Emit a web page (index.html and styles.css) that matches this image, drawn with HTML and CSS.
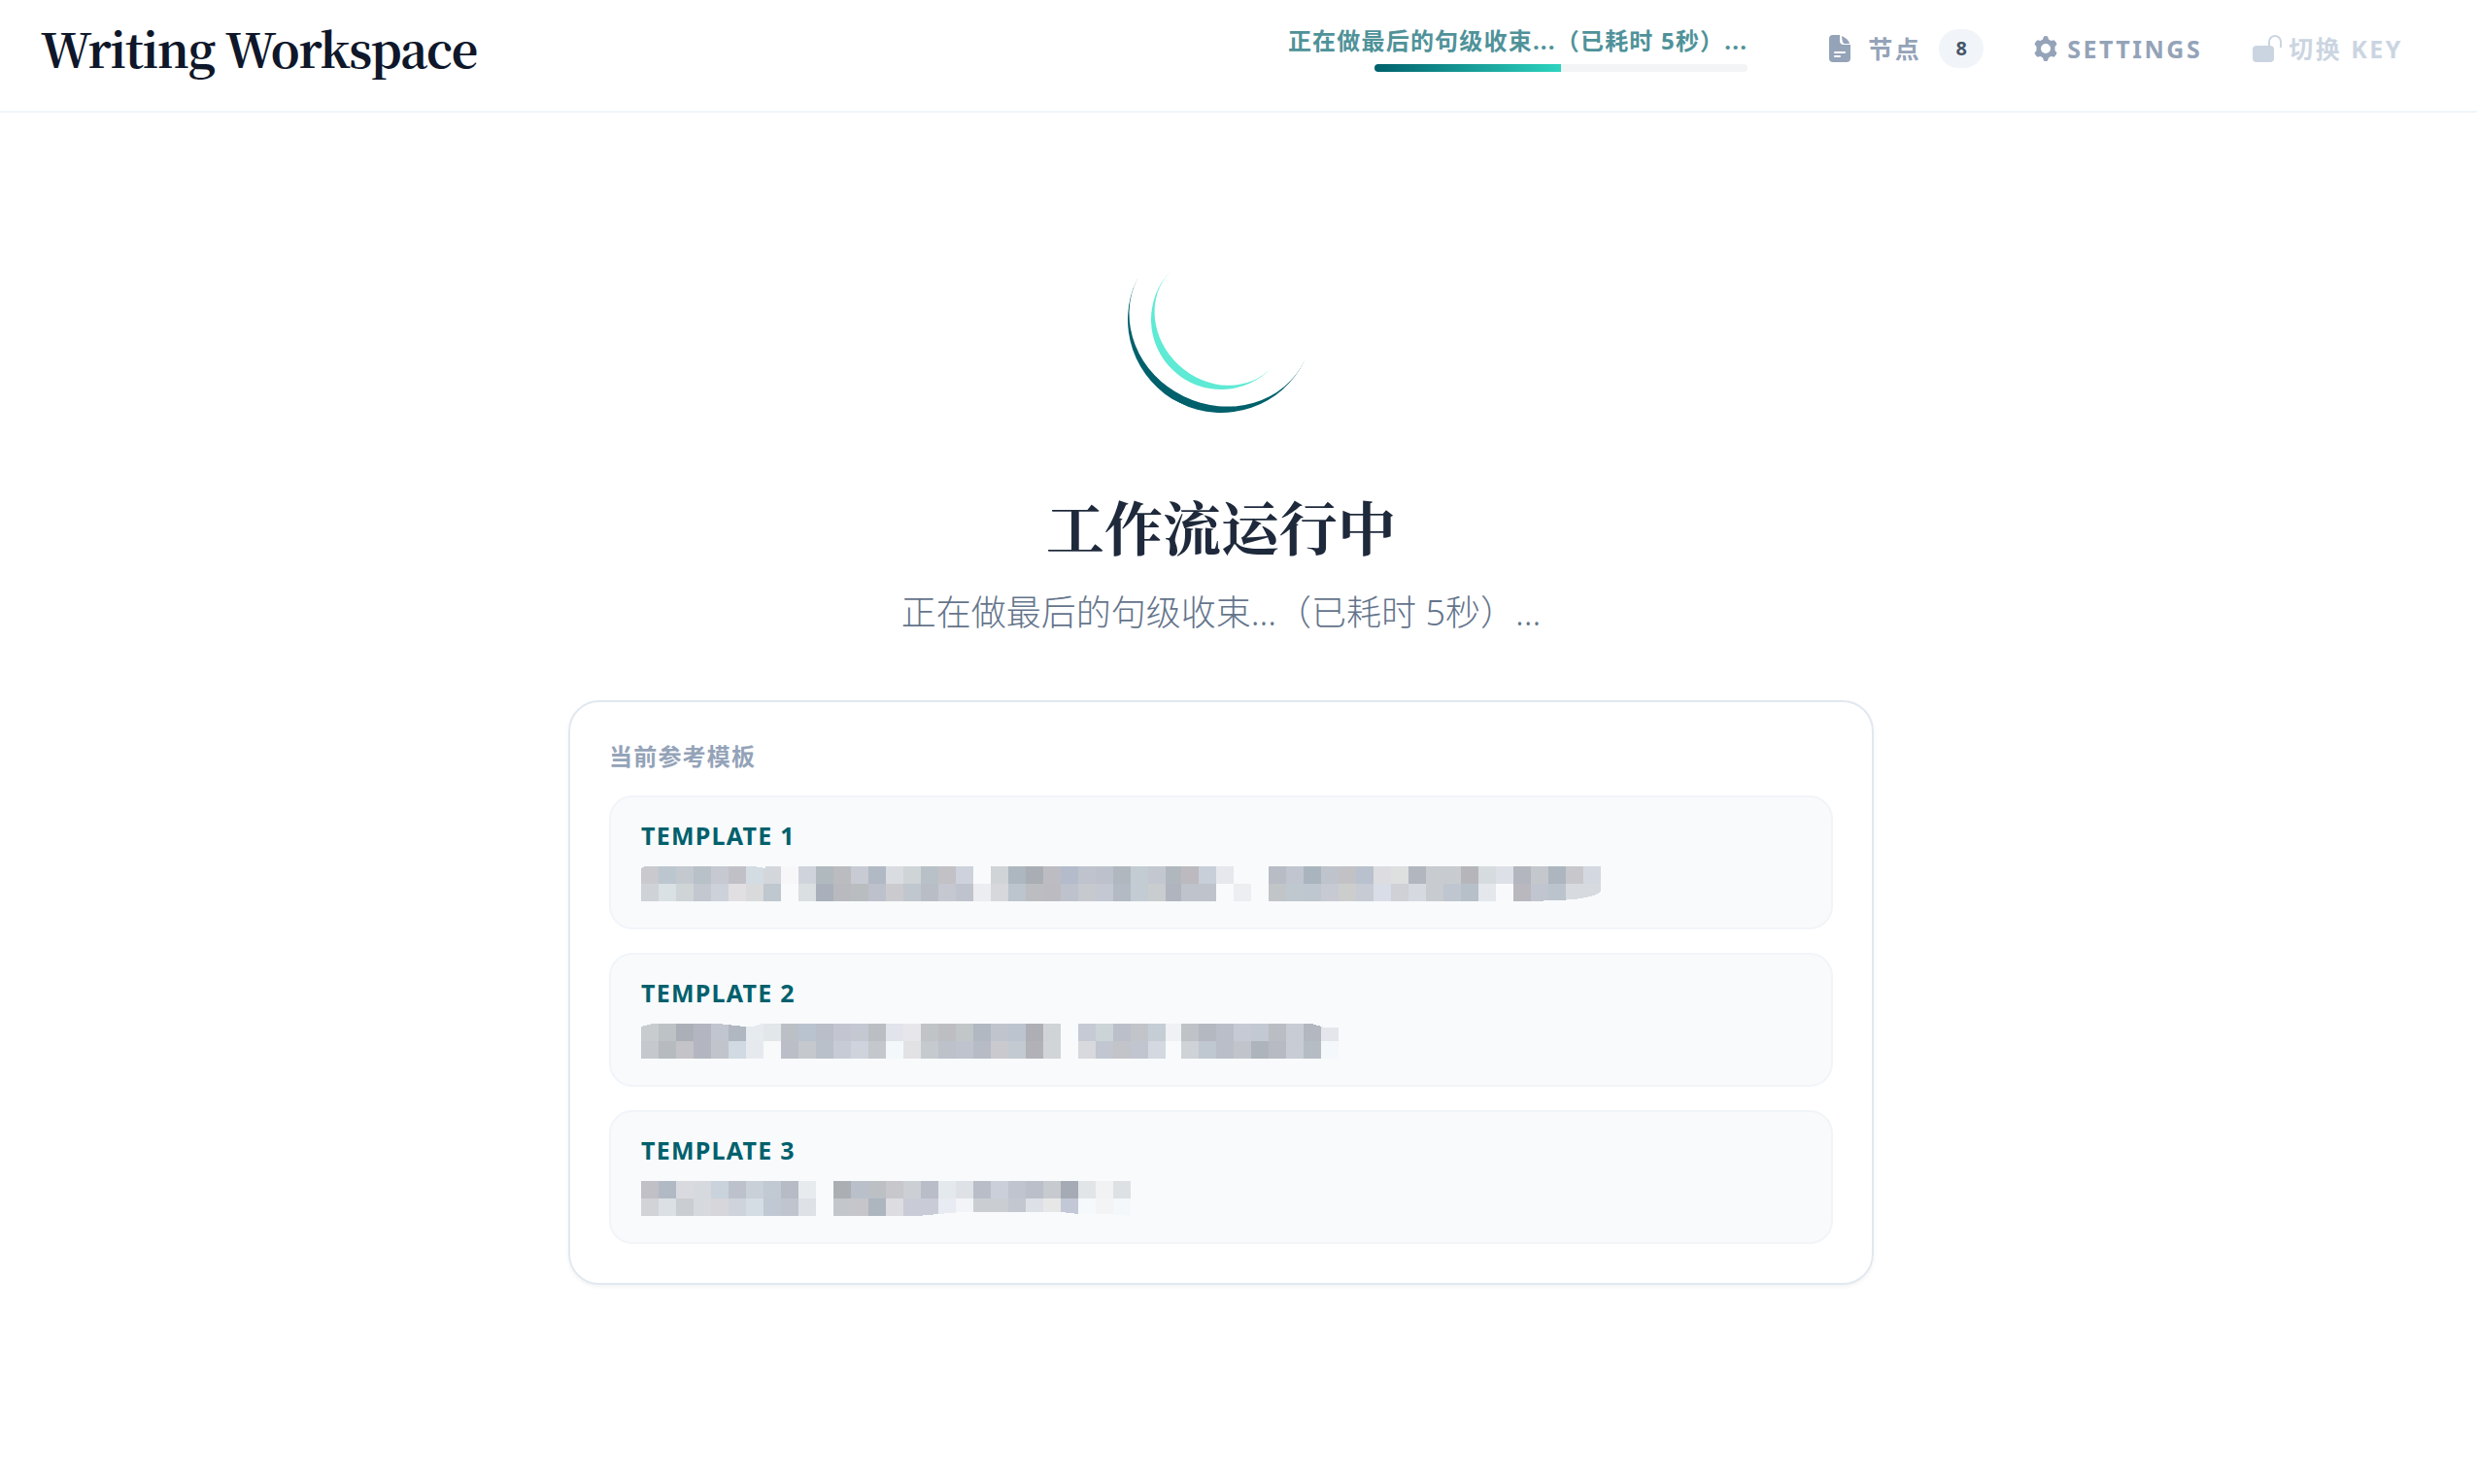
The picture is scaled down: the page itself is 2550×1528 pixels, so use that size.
FILE: index.html
```html
<!DOCTYPE html>
<html lang="zh-CN">
<head>
<meta charset="utf-8">
<meta name="viewport" content="width=device-width, initial-scale=1">
<title>Writing Workspace</title>
<link rel="stylesheet" href="styles.css">
</head>
<body>
<header class="topbar">
  <h1 class="brand">Writing Workspace</h1>
  <div class="topbar-right">
    <div class="status">
      <span class="status-text">正在做最后的句级收束...（已耗时 5秒）...</span>
      <div class="progress"><div class="progress-fill" style="width: 50%"></div></div>
    </div>
    <nav class="actions">
      <button class="action action-nodes" type="button">
        <svg class="icon-file" viewBox="0 0 22 28" aria-hidden="true"><path fill-rule="evenodd" d="M4 0H11V7A4 4 0 0 0 15 10H22V24A4 4 0 0 1 18 28H4A4 4 0 0 1 0 24V4A4 4 0 0 1 4 0ZM6 17A1 1 0 0 0 6 19H16A1 1 0 0 0 16 17ZM6 21A1 1 0 0 0 6 23H11A1 1 0 0 0 11 21Z"/><path d="M13 1Q20 4 21 9H15.500Q13.500 8 13 1Z"/></svg>
        <span>节点</span>
        <span class="badge">8</span>
      </button>
      <button class="action" type="button">
        <svg class="icon-gear" viewBox="0 0 24 26" aria-hidden="true"><path fill-rule="evenodd" d="M10 0.500Q12-0.500 14 0.500L15 3.500L17.500 5L20.500 4.200Q22.500 5.500 23.500 8.500L21.500 11V15L23.500 17.500Q22.500 20.500 20.500 21.800L17.500 21L15 22.500L14 25.500Q12 26.500 10 25.500L9 22.500L6.500 21L3.500 21.800Q1.500 20.500 0.500 17.500L2.500 15V11L0.500 8.500Q1.500 5.500 3.500 4.200L6.500 5L9 3.500ZM12 8A5 5 0 1 0 12 18A5 5 0 1 0 12 8Z"/></svg>
        <span>SETTINGS</span>
      </button>
      <button class="action action-muted" type="button">
        <svg class="icon-lock" viewBox="0 0 30 28" aria-hidden="true"><rect x="0" y="11" width="22" height="17" rx="4"/><path class="shackle" d="M17 11V7A6 6 0 0 1 29 7V13"/></svg>
        <span>切换 KEY</span>
      </button>
    </nav>
  </div>
</header>
<main class="main">
  <div class="spinner" role="status" aria-label="工作流运行中"><div class="ring ring-outer"></div><div class="ring ring-inner"></div></div>
  <h2 class="heading">工作流运行中</h2>
  <p class="subtitle">正在做最后的句级收束...（已耗时 5秒）...</p>
  <section class="card">
    <h3 class="card-label">当前参考模板</h3>
    <ul class="templates">
      <li class="template"><h4 class="template-name">TEMPLATE 1</h4><svg class="mosaic" data-row="0" aria-hidden="true"></svg></li>
      <li class="template"><h4 class="template-name">TEMPLATE 2</h4><svg class="mosaic" data-row="1" aria-hidden="true"></svg></li>
      <li class="template"><h4 class="template-name">TEMPLATE 3</h4><svg class="mosaic" data-row="2" aria-hidden="true"></svg></li>
    </ul>
  </section>
</main>
<script src="mosaic.js"></script>
</body>
</html>
```
FILE: mosaic.js
```js
// Censored template names: two lines of 18px tiles each, "-" is an empty tile.
const TILE = 18;
// The tile that meets the edge of a block is narrower.
const SEAM = 30;
const SEAM_WIDTH = 16;
const MOSAICS = [
  {
    rows: [
      "c9c9ce bcc6cf c4c9cf b8c0c8 c6c9d2 c2c0c7 d3dce3 d3d6db f7f7f9 cfd3db b0b9be bbbcc0 c8cbd4 b1b9c5 d9dce0 cfd4d7 b8c1c8 c2c1c5 cdd2dc - d0d4d7 adb7c0 a9adb4 bebcc3 b4bccb bfc3cd bcc1cb b1b7be c3ccd3 c3c8d0 b0b8be bcbabf c8cfd9 e7e8ee - f9fafc b8bcc5 c1c5cf a9b4be bfc3cb c2c1c5 b9c1ce dddde1 dde0df b2b7bf c8cbcf c8cbcf b6b6ba d5dbde dde0e6 b3b6be c4c7cc adb6bf c8c8cc d4d9e1",
      "cfd3d8 dae1e4 cfd4d6 c3c7d0 cdd1da e2dfe3 d9dadc bfc7cf - dadfe2 a9b0bb b8babf babdc0 bdc1cc cbcbcf c1c7ce b8bdc6 c5c8d1 bfc3cd ecedf1 d6d8dc bcc5cd bbbdc1 bdbbc2 bdc2cc c6c9ce c3c8d3 b3bac3 c4ccd3 c9cdcf b0b4bf bfc3cb bfc3cb - edeef2 - c1c5c8 c0c8cf bec6cf c7c9d3 cccecd c6cbd4 d9dde7 cfd1d6 d6d9df c8cbcf bfc6d0 b7c0c8 e4e8ed f8f9fb b8b8be c1c5cf bbc3cc d7dadf d7dbe0"
    ],
    trim: "M988 24V36H914L943 35Q978 34 988 26Z M0 0H4L0 2Z M116 0H128V2Z"
  },
  {
    rows: [
      "c8ccce bcc2c5 abb0b8 b3b6c0 c1c5cf b0b7c1 e6ebef e2e7e9 bbc0c6 b9c2cf b9bec9 c3c6d0 c3c8d1 bbbfc4 e1e4eb e7e6ea c0c4c6 bdbec1 c1c7c9 b2b8c2 bfc4cd bbc4cf aeafb4 d0d4d7 - c5cad4 ccd4d7 bbbfc9 c1c4c9 c5cdd5 f0f1f4 bfc3c8 b4b8c1 babec8 c6cad4 c2c9d2 babdc3 c8ccd5 b2b7c0 e5e6ec",
      "c5c8cd b5bbbf c4c3c8 b3b6c1 c1c4ca d1dae2 e6eaef f8f9fb bbbec6 c5c9cd bac0c9 c7cbd5 cfd3dc c4c8cd f3f8fb e2e2e5 c5cacf bcc1ca bec3cd b6bbc5 cacace c3cad1 b2b1b8 d1d5d8 - d8d9dd c1c6d0 c2c4c9 c1c5cf d3d8e1 - cfd2d7 bfc7d0 babec8 c1c5cb aeb4bc b7bac3 c8ccd5 b6bcc3 f4f8fb"
    ],
    trim: "M0 0H12L0 3Z M80 0H124L116 3H106Z M690 0H720V4H704Z"
  },
  {
    rows: [
      "c1c0c7 b1bac4 d9dadf d6dade cad3dc bdc1cb c9d0d7 c1c9d3 b7bbc6 e7ebee - abafb4 b9c0ca bcbfc4 c8c7cc cccfd4 b9bdc7 e4e9ee dee1e6 b9bdc7 cbcfd9 c0c4cf babfc9 c7cbd0 a5abb4 e2e5e8 f1f2f4 dde1e4",
      "d1d3d7 dae0e3 cacdd1 d6dade d6d6db ced3dc d4dce4 bfc8d3 c0c4cf dee1e6 - c3c6cb c5c5ca adb6bf dddce1 c9ccd7 c9ccd7 e8ebf1 f3f4f8 cacdd2 cacdd2 c3c7d0 dde0e6 e7e7e7 c2c8d5 f5f9fc f3f4f6 f4f8fb"
    ],
    trim: "M284 36L306 34L330 32H432L450 34H480L504 36Z"
  }
];
const NS = "http://www.w3.org/2000/svg";
const add = (parent, name, attrs) => {
  const node = document.createElementNS(NS, name);
  for (const key in attrs) node.setAttribute(key, attrs[key]);
  parent.appendChild(node);
};
document.querySelectorAll(".mosaic").forEach((svg) => {
  const mosaic = MOSAICS[svg.dataset.row];
  mosaic.rows.forEach((row, y) => {
    let left = 0;
    row.split(" ").forEach((color, x) => {
      const width = x === SEAM ? SEAM_WIDTH : TILE;
      if (color !== "-") add(svg, "rect", { x: left, y: y * TILE, width, height: TILE, fill: "#" + color });
      left += width;
    });
  });
  add(svg, "path", { d: mosaic.trim, class: "mosaic-trim" });
});
```
FILE: styles.css
```css
* { box-sizing: border-box; margin: 0; padding: 0; }

body {
  background: #fff;
  color: #1e293b;
  font-family: "Noto Sans", "Noto Sans CJK SC", sans-serif;
}

.topbar {
  display: flex;
  justify-content: space-between;
  align-items: flex-start;
  padding: 14px 76px 0 42px;
  min-height: 116px;
  border-bottom: 2px solid #f1f5f9;
}
.brand {
  font-family: "Noto Serif CJK SC", "Source Serif 4", "Liberation Serif", serif;
  font-size: 48px;
  line-height: 72px;
  font-weight: 700;
  letter-spacing: -0.025em;
  color: #0f172a;
  white-space: nowrap;
}
.topbar-right { display: flex; align-items: flex-start; gap: 84px; }

.status {
  display: flex;
  flex-direction: column;
  align-items: flex-end;
  gap: 8px;
  padding-top: 12px;
}
.status-text {
  font-size: 24px;
  line-height: 32px;
  font-weight: 700;
  letter-spacing: 0.05em;
  color: #4f9299;
  white-space: nowrap;
}
.progress {
  width: 384px;
  height: 8px;
  border-radius: 4px;
  overflow: hidden;
  background: #f3f4f6;
}
.progress-fill { height: 100%; background: linear-gradient(90deg, #00606c, #2dd4bf); }

.actions { display: flex; align-items: center; gap: 52px; padding-top: 16px; }
.action {
  display: flex;
  align-items: center;
  gap: 10px;
  height: 40px;
  border: 0;
  background: none;
  color: #94a3b8;
  font: 700 25px/32px "Noto Sans", "Noto Sans CJK SC", sans-serif;
  letter-spacing: 0.1em;
  white-space: nowrap;
  cursor: pointer;
}
.action svg { fill: currentColor; flex: none; }
.action-nodes { gap: 18px; }
.action-muted { gap: 7px; color: #cbd5e1; }
.icon-file { width: 22px; height: 28px; }
.icon-gear { width: 24px; height: 26px; }
.icon-lock { width: 30px; height: 28px; overflow: visible; }
.shackle { fill: none; stroke: currentColor; stroke-width: 2; }
.badge {
  min-width: 46px;
  padding: 0 16px;
  border-radius: 20px;
  background: #f1f5f9;
  color: #475569;
  font-size: 20px;
  line-height: 40px;
  letter-spacing: 0;
  text-align: center;
}

.main {
  display: flex;
  flex-direction: column;
  align-items: center;
  padding: 117px 36px 200px 0;
}
.spinner { display: grid; place-items: center; width: 192px; height: 192px; }
.ring { grid-area: 1 / 1; border-radius: 50%; }
.ring-outer { width: 192px; height: 192px; border-bottom: 8px solid #00606c; transform: rotate(26deg); }
.ring-inner { width: 144px; height: 144px; border-bottom: 8px solid #5eead4; transform: rotate(43deg); }

.heading {
  margin-top: 76px;
  font-family: "Noto Serif CJK SC", "Source Han Serif SC", "Noto Sans CJK SC", serif;
  font-size: 60px;
  line-height: 80px;
  font-weight: 700;
  color: #1e293b;
}
.subtitle {
  margin-top: 24px;
  font-size: 36px;
  line-height: 52px;
  font-weight: 300;
  color: #64748b;
}

.card {
  width: 100%;
  max-width: 1344px;
  margin-top: 64px;
  padding: 40px;
  border: 2px solid #e2e8f0;
  border-radius: 32px;
  box-shadow: 0 2px 4px rgba(0, 0, 0, 0.05);
}
.card-label {
  font-size: 24px;
  line-height: 32px;
  font-weight: 700;
  letter-spacing: 0.05em;
  color: #94a3b8;
}
.templates { display: grid; gap: 24px; margin-top: 24px; list-style: none; }
.template {
  padding: 23px 31px 27px;
  border: 2px solid #f1f5f9;
  border-radius: 24px;
  background: #f8fafc;
}
.template-name {
  font-size: 25px;
  line-height: 32px;
  font-weight: 700;
  letter-spacing: 0.05em;
  color: #00606c;
}
.mosaic { display: block; width: 100%; height: 36px; margin-top: 16px; shape-rendering: crispEdges; }
.mosaic-trim { fill: #f8fafc; }
```
